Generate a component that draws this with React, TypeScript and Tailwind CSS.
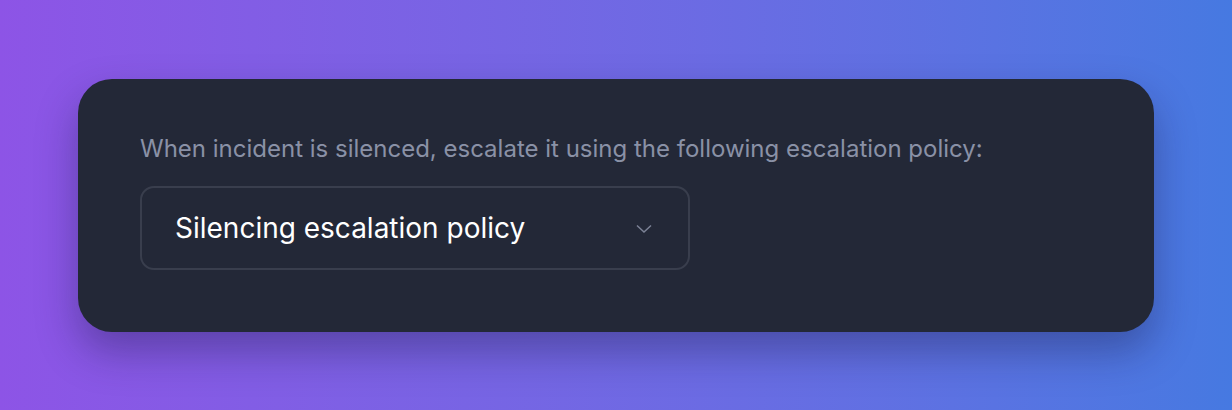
import React from 'react';

export default function App() {
  return (
    <div
      className="w-full h-[410px] flex items-center justify-center bg-gradient-to-r from-[#8d54e6] to-[#4679e1]"
      style={{ fontFamily: 'Inter, "Noto Sans", sans-serif' }}
    >
      <div className="w-[1076px] h-[253px] rounded-[34px] bg-[#232837] shadow-[0_20px_40px_rgba(20,20,60,0.35)] pl-[62px] pt-[54px]">
        <p className="text-[24px] leading-[32px] text-[#8a91a6]">
          When incident is silenced, escalate it using the following escalation policy:
        </p>
        <div className="mt-[21px] w-[550px] h-[84px] rounded-[14px] border-2 border-[#393e4d] flex items-center justify-between pl-[33px] pr-[36px]">
          <span className="text-[28px] leading-none text-white">Silencing escalation policy</span>
          <svg width="16" height="10" viewBox="0 0 16 10" fill="none" className="mt-[2px]">
            <path d="M1 1.5 L8 8 L15 1.5" stroke="#7c8296" strokeWidth="1.5" />
          </svg>
        </div>
      </div>
    </div>
  );
}
